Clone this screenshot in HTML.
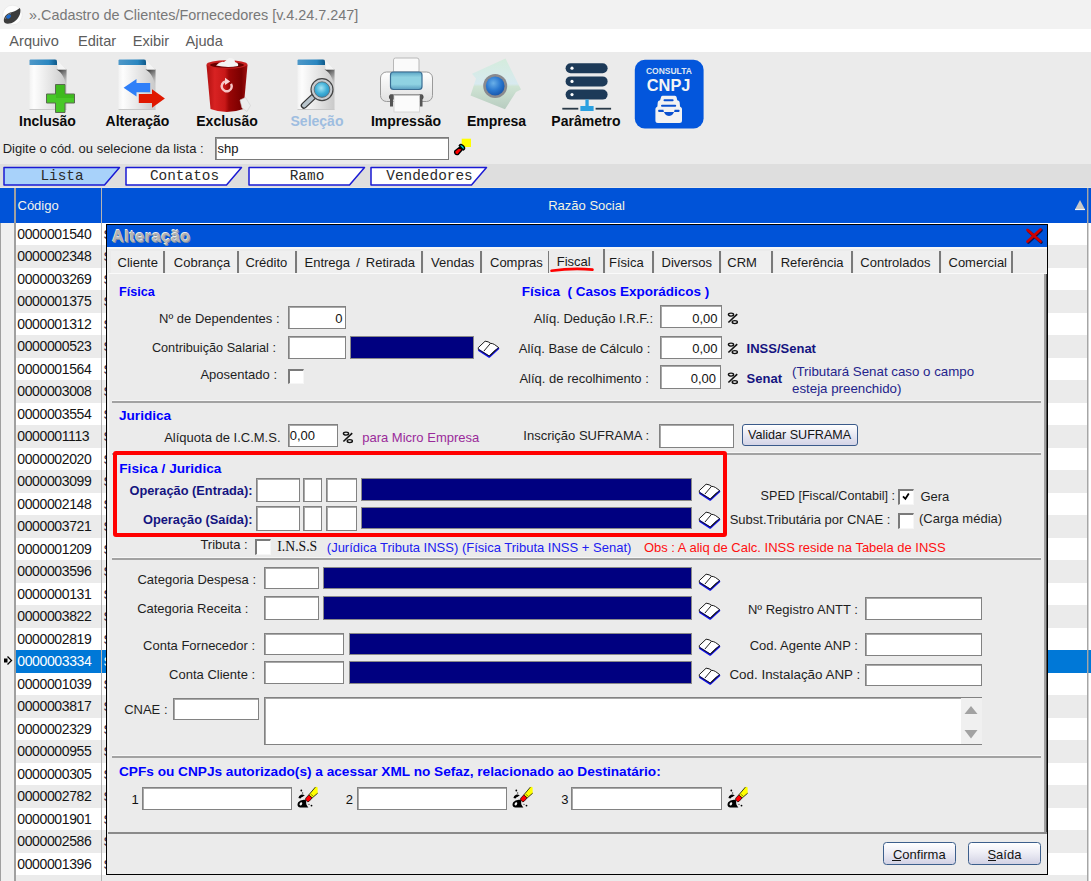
<!DOCTYPE html>
<html><head><meta charset="utf-8">
<style>
html,body{margin:0;padding:0;}
body{width:1091px;height:881px;overflow:hidden;position:relative;background:#ebebeb;font-family:"Liberation Sans", sans-serif;}
.a{position:absolute;}
.t{position:absolute;white-space:pre;line-height:1;}
</style></head><body>

<div class="a" style="left:0px;top:0px;width:1091px;height:29px;background:#f2f2f2;"></div>
<svg class="a" style="left:1px;top:3px" width="24" height="24" viewBox="0 0 24 24">
<circle cx="11.5" cy="12" r="9.8" fill="#fdfdfd" stroke="#e4e4e4" stroke-width="0.6"/>
<path d="M2.8 17.5 C3 13 6.5 9.8 10.5 9.2 C14 8.6 16.5 6.5 18.8 5 C20.5 8 19 14.5 13.5 18.5 C9.5 21.3 2.8 22 2.8 17.5 Z" fill="#3c3c3c"/>
<path d="M4.5 16 C5 13 7.5 11 10 10.5" stroke="#8a8a8a" stroke-width="0.8" fill="none"/>
<ellipse cx="7.6" cy="13.6" rx="2.5" ry="1.9" fill="#1a6ad0" transform="rotate(-30 7.6 13.6)"/>
</svg>
<div class="t" style="left:29px;top:7.81px;font-size:14.4px;font-weight:normal;color:#787878;font-family:'Liberation Sans', sans-serif;">».Cadastro de Clientes/Fornecedores [v.4.24.7.247]</div>
<div class="a" style="left:0px;top:29px;width:1091px;height:23px;background:#ffffff;"></div>
<div class="t" style="left:9.3px;top:33.64px;font-size:14.6px;font-weight:normal;color:#5c5c5c;font-family:'Liberation Sans', sans-serif;">Arquivo</div>
<div class="t" style="left:78px;top:33.64px;font-size:14.6px;font-weight:normal;color:#5c5c5c;font-family:'Liberation Sans', sans-serif;">Editar</div>
<div class="t" style="left:132.7px;top:33.64px;font-size:14.6px;font-weight:normal;color:#5c5c5c;font-family:'Liberation Sans', sans-serif;">Exibir</div>
<div class="t" style="left:185.5px;top:33.64px;font-size:14.6px;font-weight:normal;color:#5c5c5c;font-family:'Liberation Sans', sans-serif;">Ajuda</div>
<div class="a" style="left:0px;top:52px;width:1091px;height:112px;background:#ebebeb;"></div>
<svg width="0" height="0" style="position:absolute">
<defs>
<linearGradient id="pg" x1="0" y1="0" x2="1" y2="0">
<stop offset="0" stop-color="#f2f2f2"/><stop offset="0.12" stop-color="#fdfdfd"/><stop offset="0.6" stop-color="#e2e2e2"/><stop offset="1" stop-color="#c9c9c9"/></linearGradient>
<linearGradient id="pb" x1="0" y1="0" x2="1" y2="0">
<stop offset="0" stop-color="#4f98c8"/><stop offset="0.7" stop-color="#2a86c0"/><stop offset="1" stop-color="#0f5a8a"/></linearGradient>
<linearGradient id="fold" x1="0" y1="0" x2="1" y2="1">
<stop offset="0" stop-color="#ffffff"/><stop offset="0.5" stop-color="#e6e6e6"/><stop offset="0.5" stop-color="#555"/><stop offset="1" stop-color="#c8c8c8"/></linearGradient>
<linearGradient id="shad2" x1="0.2" y1="0" x2="0.6" y2="1"><stop offset="0" stop-color="#2a2a2a" stop-opacity="0.95"/><stop offset="0.5" stop-color="#777" stop-opacity="0.6"/><stop offset="1" stop-color="#c8c8c8" stop-opacity="0"/></linearGradient>
<linearGradient id="shad" x1="0" y1="0" x2="0" y2="1">
<stop offset="0" stop-color="#3a3a3a" stop-opacity="0.85"/><stop offset="1" stop-color="#c8c8c8" stop-opacity="0"/></linearGradient>
<linearGradient id="trash" x1="0" y1="0" x2="1" y2="0">
<stop offset="0" stop-color="#b01010"/><stop offset="0.2" stop-color="#d82222"/><stop offset="0.45" stop-color="#c81818"/><stop offset="0.55" stop-color="#9a0606"/><stop offset="0.85" stop-color="#7a0000"/><stop offset="1" stop-color="#a01010"/></linearGradient>
<radialGradient id="lens" cx="0.45" cy="0.4" r="0.6">
<stop offset="0" stop-color="#a8e4f4"/><stop offset="0.6" stop-color="#40b0d8"/><stop offset="1" stop-color="#2a90c0"/></radialGradient>
<linearGradient id="prb" x1="0" y1="0" x2="0" y2="1">
<stop offset="0" stop-color="#ffffff"/><stop offset="1" stop-color="#e0e0e0"/></linearGradient>
<linearGradient id="prp" x1="0" y1="0" x2="0" y2="1">
<stop offset="0" stop-color="#5aa4c4"/><stop offset="0.3" stop-color="#8fd2e2"/><stop offset="0.7" stop-color="#8fd2e2"/><stop offset="1" stop-color="#5a9ec0"/></linearGradient>
<linearGradient id="emp" x1="0" y1="0" x2="0" y2="1">
<stop offset="0" stop-color="#d4ecdc"/><stop offset="0.5" stop-color="#d8eaf0"/><stop offset="0.55" stop-color="#cfe4d4"/><stop offset="1" stop-color="#b8ccc0"/></linearGradient>
<radialGradient id="ball" cx="0.4" cy="0.35" r="0.65">
<stop offset="0" stop-color="#6ab0e8"/><stop offset="0.6" stop-color="#2a78d0"/><stop offset="1" stop-color="#1a5ab0"/></radialGradient>
<linearGradient id="btn" x1="0" y1="0" x2="0" y2="1">
<stop offset="0" stop-color="#ffffff"/><stop offset="0.5" stop-color="#ececf4"/><stop offset="1" stop-color="#cfcfe2"/></linearGradient>
</defs></svg>
<svg class="a" style="left:28.5px;top:59px" width="40" height="52" viewBox="0 0 40 52">
<path d="M0.5 5 L0.5 50.5 L37.5 50.5 L37.5 10.5 L28 0.5 L0.5 0.5 Z" fill="url(#pg)"/>
<path d="M27.5 10.5 L37.5 10.5 L37.5 30 C36.5 20 33 13 27.5 10.5 Z" fill="url(#shad2)"/>
<path d="M28 0.5 L37.5 10.5 L28.5 10.5 Z" fill="#f4f4f4"/>
<path d="M0.5 1.5 Q0.5 0.5 1.5 0.5 L26 0.5 Q28 0.5 28 2.5 L28 6 L0.5 6 Z" fill="url(#pb)"/>
<path d="M0.5 50.5 L37.5 50.5" stroke="#c8c8c8" stroke-width="1"/>
</svg>
<svg class="a" style="left:45px;top:83px" width="32" height="31" viewBox="0 0 32 31">
<path d="M10.5 1.5 L20 1.5 L20 11 L29.5 11 L29.5 20 L20 20 L20 29.5 L10.5 29.5 L10.5 20 L1.5 20 L1.5 11 L10.5 11 Z" fill="#48c828" stroke="#5a6a50" stroke-width="1"/>
<path d="M11 2 L19.5 2 L19.5 11.5 L29 11.5 L29 15 L11 15 Z" fill="#38b018" opacity="0.6"/>
</svg>
<div class="t" style="left:47.5px;transform:translateX(-50%);top:114.15px;font-size:14px;font-weight:bold;color:#0a0a0a;font-family:'Liberation Sans', sans-serif;">Inclusão</div>
<svg class="a" style="left:117.5px;top:59px" width="40" height="52" viewBox="0 0 40 52">
<path d="M0.5 5 L0.5 50.5 L37.5 50.5 L37.5 10.5 L28 0.5 L0.5 0.5 Z" fill="url(#pg)"/>
<path d="M27.5 10.5 L37.5 10.5 L37.5 30 C36.5 20 33 13 27.5 10.5 Z" fill="url(#shad2)"/>
<path d="M28 0.5 L37.5 10.5 L28.5 10.5 Z" fill="#f4f4f4"/>
<path d="M0.5 1.5 Q0.5 0.5 1.5 0.5 L26 0.5 Q28 0.5 28 2.5 L28 6 L0.5 6 Z" fill="url(#pb)"/>
<path d="M0.5 50.5 L37.5 50.5" stroke="#c8c8c8" stroke-width="1"/>
</svg>
<svg class="a" style="left:120px;top:76px" width="48" height="34" viewBox="0 0 48 34">
<path d="M3.6 11.8 L16.5 2.9 L16.5 7 L30.2 7 L30.2 16.2 L16.5 16.2 L16.5 20.6 Z" fill="#2f7ff8"/>
<path d="M18.8 18 L32 18 L32 13.2 L44.9 22.5 L32 31.7 L32 26.9 L18.8 26.9 Z" fill="#e01800"/>
</svg>
<div class="t" style="left:137.5px;transform:translateX(-50%);top:114.15px;font-size:14px;font-weight:bold;color:#0a0a0a;font-family:'Liberation Sans', sans-serif;">Alteração</div>
<svg class="a" style="left:204px;top:55px" width="48" height="60" viewBox="0 0 48 60">
<path d="M2.5 10 Q22.5 3 43.5 10 L39.5 54 Q22.5 60 6.5 54 Z" fill="url(#trash)"/>
<ellipse cx="23" cy="9.5" rx="20.5" ry="4.2" fill="#c82020"/>
<ellipse cx="23" cy="10" rx="17" ry="2.8" fill="#6a0000"/>
<path d="M12 10.5 Q16 6 20 7 L25 3 Q31 3 31 7 Q35 8 34 11 Q23 13 12 10.5 Z" fill="#f4f4f4"/>
<path d="M27.03 28.8 A5 5 0 1 1 21.5 26.45" fill="none" stroke="#f6c4c4" stroke-width="2.4"/>
<path d="M21 22.8 L26.2 26.4 L21 30 Z" fill="#f8d4d4"/>
<path d="M36 45 L41.5 42.5 L46.5 50.5 L43 56.5 L38 53 Z" fill="#ececec" stroke="#cfcfcf" stroke-width="0.6"/>
</svg>
<div class="t" style="left:227px;transform:translateX(-50%);top:114.15px;font-size:14px;font-weight:bold;color:#0a0a0a;font-family:'Liberation Sans', sans-serif;">Exclusão</div>
<svg class="a" style="left:297px;top:59px" width="40" height="52" viewBox="0 0 40 52">
<path d="M0.5 5 L0.5 50.5 L37.5 50.5 L37.5 10.5 L28 0.5 L0.5 0.5 Z" fill="url(#pg)"/>
<path d="M27.5 10.5 L37.5 10.5 L37.5 30 C36.5 20 33 13 27.5 10.5 Z" fill="url(#shad2)"/>
<path d="M28 0.5 L37.5 10.5 L28.5 10.5 Z" fill="#f4f4f4"/>
<path d="M0.5 1.5 Q0.5 0.5 1.5 0.5 L26 0.5 Q28 0.5 28 2.5 L28 6 L0.5 6 Z" fill="url(#pb)"/>
<path d="M0.5 50.5 L37.5 50.5" stroke="#c8c8c8" stroke-width="1"/>
</svg>
<svg class="a" style="left:300px;top:76px" width="36" height="34" viewBox="0 0 36 34">
<path d="M4 29.5 L13 21" stroke="#333" stroke-width="6.5" stroke-linecap="round"/>
<path d="M4 29.5 L13 21" stroke="#b8c4cc" stroke-width="4" stroke-linecap="round"/>
<circle cx="22" cy="13.6" r="11" fill="#c8ccd0" stroke="#444" stroke-width="1.2"/>
<circle cx="22" cy="13.6" r="7.8" fill="url(#lens)" stroke="#606468" stroke-width="0.8"/>
</svg>
<div class="t" style="left:317px;transform:translateX(-50%);top:114.15px;font-size:14px;font-weight:bold;color:#9ebde0;font-family:'Liberation Sans', sans-serif;">Seleção</div>
<svg class="a" style="left:379px;top:57px" width="56" height="57" viewBox="0 0 56 57">
<rect x="14.5" y="1" width="25.5" height="15" rx="2" fill="#fafafa" stroke="#b8b8b8" stroke-width="1"/>
<rect x="1.5" y="15" width="52" height="29.5" rx="6" fill="url(#prb)" stroke="#9a9a9a" stroke-width="1"/>
<rect x="11.5" y="15" width="31.5" height="17.5" rx="3" fill="url(#prp)" stroke="#3a6e94" stroke-width="1.2"/>
<rect x="10" y="37.5" width="34.5" height="5" rx="2" fill="#4a4a4a"/>
<rect x="11" y="37.5" width="3" height="12" fill="#555"/>
<rect x="40.5" y="37.5" width="3" height="12" fill="#555"/>
<rect x="15" y="38.5" width="25.5" height="16.5" fill="#fbfbfb" stroke="#d0d0d0" stroke-width="0.8"/>
</svg>
<div class="t" style="left:406px;transform:translateX(-50%);top:114.15px;font-size:14px;font-weight:bold;color:#0a0a0a;font-family:'Liberation Sans', sans-serif;">Impressão</div>
<svg class="a" style="left:468px;top:56px" width="56" height="56" viewBox="0 0 56 56">
<path d="M37.5 2.6 L53 33.6 L48 36 L37 53.2 L2.5 39.5 L8 22.5 L4 17.8 Z" fill="url(#emp)"/>
<circle cx="27.2" cy="30" r="12" fill="#8a8a8e"/>
<circle cx="27.2" cy="30" r="9.4" fill="url(#ball)"/>
</svg>
<div class="t" style="left:496.5px;transform:translateX(-50%);top:114.15px;font-size:14px;font-weight:bold;color:#0a0a0a;font-family:'Liberation Sans', sans-serif;">Empresa</div>
<svg class="a" style="left:560px;top:60px" width="56" height="54" viewBox="0 0 56 54">
<rect x="5.6" y="3.2" width="42" height="10" rx="5" fill="#1d3a58"/>
<rect x="5.6" y="16.4" width="42" height="10" rx="5" fill="#1d3a58"/>
<rect x="5.6" y="29.6" width="42" height="10" rx="5" fill="#1d3a58"/>
<circle cx="12" cy="8.2" r="1.6" fill="#fff"/><circle cx="12" cy="21.4" r="1.6" fill="#fff"/><circle cx="12" cy="34.6" r="1.6" fill="#fff"/>
<rect x="25.4" y="39.5" width="3.3" height="7" fill="#2aa0e0"/>
<rect x="20.4" y="46" width="13.2" height="5" fill="#2aa0e0"/>
<rect x="2.3" y="47.8" width="16" height="1.8" fill="#2a3a48"/>
<rect x="35.6" y="47.8" width="15.5" height="1.8" fill="#2a3a48"/>
</svg>
<div class="t" style="left:586px;transform:translateX(-50%);top:114.15px;font-size:14px;font-weight:bold;color:#0a0a0a;font-family:'Liberation Sans', sans-serif;">Parâmetro</div>
<svg class="a" style="left:634px;top:59px" width="71" height="71" viewBox="0 0 71 71">
<rect x="0.8" y="0.8" width="68.8" height="68.6" rx="10" fill="#0356dc"/>
<text x="11.9" y="14.6" textLength="46" lengthAdjust="spacingAndGlyphs" font-family="Liberation Sans" font-weight="bold" font-size="8.2" fill="#dfe6f2">CONSULTA</text>
<text x="12.8" y="32.3" textLength="43.6" lengthAdjust="spacingAndGlyphs" font-family="Liberation Sans" font-weight="bold" font-size="16.2" fill="#f4f4f4">CNPJ</text>
<path d="M27 38.3 Q27 36.8 28.5 36.8 L40.9 36.8 Q42.4 36.8 42.6 38.3 L43.3 41.3 L44.6 41.8 Q45.6 42.3 45.7 43.8 L46 47.6 L47 48.2 Q48 48.8 48 50.3 L48 61.5 Q48 64 45.5 64 L23.9 64 Q21.4 64 21.4 61.5 L21.4 50.3 Q21.4 48.8 22.4 48.2 L23.4 47.6 L23.7 43.8 Q23.8 42.3 24.8 41.8 L26.1 41.3 Z" fill="#f2f2f2"/>
<rect x="29.5" y="40.2" width="10.1" height="2.1" rx="1" fill="#0a50d0"/>
<rect x="27" y="45.7" width="15.2" height="2" rx="1" fill="#0a50d0"/>
<path d="M24.8 50.8 L29.4 50.8 Q30.2 56.9 35 56.9 Q39.8 56.9 40.6 50.8 L44.9 50.8 Q45.6 50.8 45.6 51.8 Q45.6 52.9 44.9 52.9 L24.8 52.9 Q24.1 52.9 24.1 51.8 Q24.1 50.8 24.8 50.8 Z" fill="#0a50d0"/>
</svg>
<div class="t" style="left:2.7px;top:141.70px;font-size:13px;font-weight:normal;color:#1e1e1e;font-family:'Liberation Sans', sans-serif;">Digite o cód. ou selecione da lista :</div>
<div class="a" style="left:215px;top:137px;width:234px;height:23px;background:#fff;box-sizing:border-box;border:1px solid #7a7a7a;box-shadow:inset 1px 1px 0 #9a9a9a;"></div>
<div class="t" style="left:217.5px;top:141.50px;font-size:13px;font-weight:normal;color:#111;font-family:'Liberation Sans', sans-serif;">shp</div>
<svg class="a" style="left:452px;top:137px" width="22" height="20" viewBox="0 0 22 20">
<rect x="9.7" y="1.7" width="9.3" height="8.3" fill="#ffff00"/>
<path d="M2.8 14 L7.6 10.2 L10.2 12.8 L6.3 17.3 Q4.5 18.2 3.2 16.8 Q2.2 15.5 2.8 14 Z" fill="#ff0000" stroke="#000" stroke-width="1.4" stroke-linejoin="round"/>
<path d="M7.2 8.6 Q8.6 6.8 10.6 8.2 L12 9.6 Q13.4 11.6 11.4 13 Z" fill="#00e8e8" stroke="#000" stroke-width="1.4" stroke-linejoin="round"/>
</svg>
<div class="a" style="left:0px;top:164px;width:1091px;height:24px;background:#dedede;"></div>
<svg class="a" style="left:2.5px;top:166px" width="120" height="21" viewBox="0 0 120 21">
<path d="M1 1.5 L116.5 1.5 L101.5 19 L1 19 Z" fill="#a8d2fa" stroke="#1a1ad4" stroke-width="1.5" stroke-linejoin="round"/>
</svg>
<div class="t" style="left:62.0px;transform:translateX(-50%);top:169.41px;font-size:14.4px;font-weight:normal;color:#2a2a2a;font-family:'Liberation Mono', monospace;">Lista</div>
<svg class="a" style="left:125px;top:166px" width="120" height="21" viewBox="0 0 120 21">
<path d="M1 1.5 L116.5 1.5 L101.5 19 L1 19 Z" fill="#ffffff" stroke="#1a1ad4" stroke-width="1.5" stroke-linejoin="round"/>
</svg>
<div class="t" style="left:184.5px;transform:translateX(-50%);top:169.41px;font-size:14.4px;font-weight:normal;color:#2a2a2a;font-family:'Liberation Mono', monospace;">Contatos</div>
<svg class="a" style="left:247.5px;top:166px" width="120" height="21" viewBox="0 0 120 21">
<path d="M1 1.5 L116.5 1.5 L101.5 19 L1 19 Z" fill="#ffffff" stroke="#1a1ad4" stroke-width="1.5" stroke-linejoin="round"/>
</svg>
<div class="t" style="left:307.0px;transform:translateX(-50%);top:169.41px;font-size:14.4px;font-weight:normal;color:#2a2a2a;font-family:'Liberation Mono', monospace;">Ramo</div>
<svg class="a" style="left:370px;top:166px" width="120" height="21" viewBox="0 0 120 21">
<path d="M1 1.5 L116.5 1.5 L101.5 19 L1 19 Z" fill="#ffffff" stroke="#1a1ad4" stroke-width="1.5" stroke-linejoin="round"/>
</svg>
<div class="t" style="left:429.5px;transform:translateX(-50%);top:169.41px;font-size:14.4px;font-weight:normal;color:#2a2a2a;font-family:'Liberation Mono', monospace;">Vendedores</div>
<div class="a" style="left:0px;top:188px;width:1091px;height:693px;background:#ffffff;"></div>
<div class="a" style="left:0px;top:187px;width:1091px;height:1px;background:#e6e6e6;"></div>
<div class="a" style="left:0px;top:188px;width:1091px;height:35px;background:#0053d8;"></div>
<div class="t" style="left:17.3px;top:227.15px;font-size:14px;font-weight:normal;color:#141414;font-family:'Liberation Sans', sans-serif;letter-spacing:-0.38px;">0000001540</div>
<div class="a" style="left:16px;top:245px;width:1071px;height:23px;background:#ebebeb;"></div>
<div class="t" style="left:17.3px;top:249.15px;font-size:14px;font-weight:normal;color:#141414;font-family:'Liberation Sans', sans-serif;letter-spacing:-0.38px;">0000002348</div>
<div class="t" style="left:17.3px;top:272.15px;font-size:14px;font-weight:normal;color:#141414;font-family:'Liberation Sans', sans-serif;letter-spacing:-0.38px;">0000003269</div>
<div class="a" style="left:16px;top:290px;width:1071px;height:23px;background:#ebebeb;"></div>
<div class="t" style="left:17.3px;top:294.15px;font-size:14px;font-weight:normal;color:#141414;font-family:'Liberation Sans', sans-serif;letter-spacing:-0.38px;">0000001375</div>
<div class="t" style="left:17.3px;top:317.15px;font-size:14px;font-weight:normal;color:#141414;font-family:'Liberation Sans', sans-serif;letter-spacing:-0.38px;">0000001312</div>
<div class="a" style="left:16px;top:335px;width:1071px;height:23px;background:#ebebeb;"></div>
<div class="t" style="left:17.3px;top:339.15px;font-size:14px;font-weight:normal;color:#141414;font-family:'Liberation Sans', sans-serif;letter-spacing:-0.38px;">0000000523</div>
<div class="t" style="left:17.3px;top:362.15px;font-size:14px;font-weight:normal;color:#141414;font-family:'Liberation Sans', sans-serif;letter-spacing:-0.38px;">0000001564</div>
<div class="a" style="left:16px;top:380px;width:1071px;height:23px;background:#ebebeb;"></div>
<div class="t" style="left:17.3px;top:384.15px;font-size:14px;font-weight:normal;color:#141414;font-family:'Liberation Sans', sans-serif;letter-spacing:-0.38px;">0000003008</div>
<div class="t" style="left:17.3px;top:407.15px;font-size:14px;font-weight:normal;color:#141414;font-family:'Liberation Sans', sans-serif;letter-spacing:-0.38px;">0000003554</div>
<div class="a" style="left:16px;top:425px;width:1071px;height:23px;background:#ebebeb;"></div>
<div class="t" style="left:17.3px;top:429.15px;font-size:14px;font-weight:normal;color:#141414;font-family:'Liberation Sans', sans-serif;letter-spacing:-0.38px;">0000001113</div>
<div class="t" style="left:17.3px;top:452.15px;font-size:14px;font-weight:normal;color:#141414;font-family:'Liberation Sans', sans-serif;letter-spacing:-0.38px;">0000002020</div>
<div class="a" style="left:16px;top:470px;width:1071px;height:23px;background:#ebebeb;"></div>
<div class="t" style="left:17.3px;top:474.15px;font-size:14px;font-weight:normal;color:#141414;font-family:'Liberation Sans', sans-serif;letter-spacing:-0.38px;">0000003099</div>
<div class="t" style="left:17.3px;top:497.15px;font-size:14px;font-weight:normal;color:#141414;font-family:'Liberation Sans', sans-serif;letter-spacing:-0.38px;">0000002148</div>
<div class="a" style="left:16px;top:515px;width:1071px;height:23px;background:#ebebeb;"></div>
<div class="t" style="left:17.3px;top:519.15px;font-size:14px;font-weight:normal;color:#141414;font-family:'Liberation Sans', sans-serif;letter-spacing:-0.38px;">0000003721</div>
<div class="t" style="left:17.3px;top:542.15px;font-size:14px;font-weight:normal;color:#141414;font-family:'Liberation Sans', sans-serif;letter-spacing:-0.38px;">0000001209</div>
<div class="a" style="left:16px;top:560px;width:1071px;height:23px;background:#ebebeb;"></div>
<div class="t" style="left:17.3px;top:564.15px;font-size:14px;font-weight:normal;color:#141414;font-family:'Liberation Sans', sans-serif;letter-spacing:-0.38px;">0000003596</div>
<div class="t" style="left:17.3px;top:587.15px;font-size:14px;font-weight:normal;color:#141414;font-family:'Liberation Sans', sans-serif;letter-spacing:-0.38px;">0000000131</div>
<div class="a" style="left:16px;top:605px;width:1071px;height:23px;background:#ebebeb;"></div>
<div class="t" style="left:17.3px;top:609.15px;font-size:14px;font-weight:normal;color:#141414;font-family:'Liberation Sans', sans-serif;letter-spacing:-0.38px;">0000003822</div>
<div class="t" style="left:17.3px;top:632.15px;font-size:14px;font-weight:normal;color:#141414;font-family:'Liberation Sans', sans-serif;letter-spacing:-0.38px;">0000002819</div>
<div class="a" style="left:16px;top:650px;width:1075px;height:23px;background:#0078d7;"></div>
<div class="t" style="left:17.3px;top:654.15px;font-size:14px;font-weight:normal;color:#ffffff;font-family:'Liberation Sans', sans-serif;letter-spacing:-0.38px;">0000003334</div>
<div class="t" style="left:17.3px;top:677.15px;font-size:14px;font-weight:normal;color:#141414;font-family:'Liberation Sans', sans-serif;letter-spacing:-0.38px;">0000001039</div>
<div class="a" style="left:16px;top:695px;width:1071px;height:23px;background:#ebebeb;"></div>
<div class="t" style="left:17.3px;top:699.15px;font-size:14px;font-weight:normal;color:#141414;font-family:'Liberation Sans', sans-serif;letter-spacing:-0.38px;">0000003817</div>
<div class="t" style="left:17.3px;top:722.15px;font-size:14px;font-weight:normal;color:#141414;font-family:'Liberation Sans', sans-serif;letter-spacing:-0.38px;">0000002329</div>
<div class="a" style="left:16px;top:740px;width:1071px;height:23px;background:#ebebeb;"></div>
<div class="t" style="left:17.3px;top:744.15px;font-size:14px;font-weight:normal;color:#141414;font-family:'Liberation Sans', sans-serif;letter-spacing:-0.38px;">0000000955</div>
<div class="t" style="left:17.3px;top:767.15px;font-size:14px;font-weight:normal;color:#141414;font-family:'Liberation Sans', sans-serif;letter-spacing:-0.38px;">0000000305</div>
<div class="a" style="left:16px;top:785px;width:1071px;height:23px;background:#ebebeb;"></div>
<div class="t" style="left:17.3px;top:789.15px;font-size:14px;font-weight:normal;color:#141414;font-family:'Liberation Sans', sans-serif;letter-spacing:-0.38px;">0000002782</div>
<div class="t" style="left:17.3px;top:812.15px;font-size:14px;font-weight:normal;color:#141414;font-family:'Liberation Sans', sans-serif;letter-spacing:-0.38px;">0000001901</div>
<div class="a" style="left:16px;top:830px;width:1071px;height:23px;background:#ebebeb;"></div>
<div class="t" style="left:17.3px;top:834.15px;font-size:14px;font-weight:normal;color:#141414;font-family:'Liberation Sans', sans-serif;letter-spacing:-0.38px;">0000002586</div>
<div class="t" style="left:17.3px;top:857.15px;font-size:14px;font-weight:normal;color:#141414;font-family:'Liberation Sans', sans-serif;letter-spacing:-0.38px;">0000001396</div>
<div class="a" style="left:16px;top:875px;width:1071px;height:23px;background:#ebebeb;"></div>
<div class="a" style="left:0px;top:223px;width:14px;height:658px;background:#f0f0f0;"></div>
<div class="a" style="left:0px;top:223px;width:1px;height:658px;background:#a0a0a0;"></div>
<div class="a" style="left:14px;top:188px;width:2px;height:693px;background:#a0a0a0;"></div>
<div class="a" style="left:101px;top:188px;width:1px;height:693px;background:#b4b4b4;"></div>
<div class="a" style="left:1087px;top:188px;width:1px;height:693px;background:#a6a6a6;"></div>
<div class="a" style="left:1088px;top:188px;width:1px;height:693px;background:rgba(160,160,160,0.45);"></div>
<div class="a" style="left:102px;top:223px;width:4px;height:658px;overflow:hidden;"><div class="t" style="left:1.6px;top:5.00px;font-size:13px;color:#2a1a40;font-family:'Liberation Sans'">S</div><div class="t" style="left:1.6px;top:27.00px;font-size:13px;color:#2a1a40;font-family:'Liberation Sans'">S</div><div class="t" style="left:1.6px;top:50.00px;font-size:13px;color:#2a1a40;font-family:'Liberation Sans'">S</div><div class="t" style="left:1.6px;top:72.00px;font-size:13px;color:#2a1a40;font-family:'Liberation Sans'">S</div><div class="t" style="left:1.6px;top:95.00px;font-size:13px;color:#2a1a40;font-family:'Liberation Sans'">S</div><div class="t" style="left:1.6px;top:117.00px;font-size:13px;color:#2a1a40;font-family:'Liberation Sans'">S</div><div class="t" style="left:1.6px;top:140.00px;font-size:13px;color:#2a1a40;font-family:'Liberation Sans'">S</div><div class="t" style="left:1.6px;top:162.00px;font-size:13px;color:#2a1a40;font-family:'Liberation Sans'">S</div><div class="t" style="left:1.6px;top:185.00px;font-size:13px;color:#2a1a40;font-family:'Liberation Sans'">S</div><div class="t" style="left:1.6px;top:207.00px;font-size:13px;color:#2a1a40;font-family:'Liberation Sans'">S</div><div class="t" style="left:1.6px;top:230.00px;font-size:13px;color:#2a1a40;font-family:'Liberation Sans'">S</div><div class="t" style="left:1.6px;top:252.00px;font-size:13px;color:#2a1a40;font-family:'Liberation Sans'">S</div><div class="t" style="left:1.6px;top:275.00px;font-size:13px;color:#2a1a40;font-family:'Liberation Sans'">S</div><div class="t" style="left:1.6px;top:297.00px;font-size:13px;color:#2a1a40;font-family:'Liberation Sans'">S</div><div class="t" style="left:1.6px;top:320.00px;font-size:13px;color:#2a1a40;font-family:'Liberation Sans'">S</div><div class="t" style="left:1.6px;top:342.00px;font-size:13px;color:#2a1a40;font-family:'Liberation Sans'">S</div><div class="t" style="left:1.6px;top:365.00px;font-size:13px;color:#2a1a40;font-family:'Liberation Sans'">S</div><div class="t" style="left:1.6px;top:387.00px;font-size:13px;color:#2a1a40;font-family:'Liberation Sans'">S</div><div class="t" style="left:1.6px;top:410.00px;font-size:13px;color:#2a1a40;font-family:'Liberation Sans'">S</div><div class="t" style="left:1.6px;top:432.00px;font-size:13px;color:#ffffff;font-family:'Liberation Sans'">S</div><div class="t" style="left:1.6px;top:455.00px;font-size:13px;color:#2a1a40;font-family:'Liberation Sans'">S</div><div class="t" style="left:1.6px;top:477.00px;font-size:13px;color:#2a1a40;font-family:'Liberation Sans'">S</div><div class="t" style="left:1.6px;top:500.00px;font-size:13px;color:#2a1a40;font-family:'Liberation Sans'">S</div><div class="t" style="left:1.6px;top:522.00px;font-size:13px;color:#2a1a40;font-family:'Liberation Sans'">S</div><div class="t" style="left:1.6px;top:545.00px;font-size:13px;color:#2a1a40;font-family:'Liberation Sans'">S</div><div class="t" style="left:1.6px;top:567.00px;font-size:13px;color:#2a1a40;font-family:'Liberation Sans'">S</div><div class="t" style="left:1.6px;top:590.00px;font-size:13px;color:#2a1a40;font-family:'Liberation Sans'">S</div><div class="t" style="left:1.6px;top:612.00px;font-size:13px;color:#2a1a40;font-family:'Liberation Sans'">S</div><div class="t" style="left:1.6px;top:635.00px;font-size:13px;color:#2a1a40;font-family:'Liberation Sans'">S</div><div class="t" style="left:1.6px;top:657.00px;font-size:13px;color:#2a1a40;font-family:'Liberation Sans'">S</div></div>
<div class="t" style="left:17.5px;top:198.70px;font-size:13px;font-weight:normal;color:#f4f4ec;font-family:'Liberation Sans', sans-serif;">Código</div>
<div class="t" style="left:586.5px;transform:translateX(-50%);top:198.70px;font-size:13px;font-weight:normal;color:#f4f4e0;font-family:'Liberation Sans', sans-serif;">Razão Social</div>
<svg class="a" style="left:1074px;top:199px" width="12" height="12" viewBox="0 0 12 12">
<path d="M6 1 L11 10.5 L1 10.5 Z" fill="#c8c8c8"/><path d="M1 10.5 L11 10.5" stroke="#f4f4f4" stroke-width="1.2"/>
</svg>
<svg class="a" style="left:3px;top:655px" width="10" height="11" viewBox="0 0 10 11">
<rect x="1" y="3.5" width="3.5" height="4" fill="#000"/>
<path d="M4.5 1.5 L8.5 5.5 L4.5 9.5" fill="none" stroke="#000" stroke-width="1.3"/>
</svg>
<div class="a" style="left:106px;top:224px;width:942px;height:650.5px;background:#ebebeb;box-sizing:border-box;border:1.4px solid #000;"></div>
<div class="a" style="left:107.4px;top:225.4px;width:939.4px;height:22px;background:#0053d8;"></div>
<div class="a" style="left:107.4px;top:247.4px;width:939.4px;height:1.6px;background:#f6f6f6;"></div>
<div class="t" style="left:112px;top:227.82px;font-size:16.4px;font-weight:bold;color:#b4b4b4;font-family:'Liberation Sans', sans-serif;letter-spacing:0.45px;text-shadow:-0.6px -0.6px 0 #ececec, 0.8px 0.8px 0 #7a8aa0;">Alteração</div>
<svg class="a" style="left:1023px;top:226px" width="22" height="19" viewBox="0 0 22 19">
<path d="M4.5 4 L17.5 15.5 M17.5 3.5 L4.5 15.5" stroke="#0a1450" stroke-width="3" stroke-linecap="round" transform="translate(0.8,0.8)"/>
<path d="M4.5 4 L17.5 15.5 M17.5 3.5 L4.5 15.5" stroke="#d00000" stroke-width="2.7" stroke-linecap="round"/>
</svg>
<div class="a" style="left:111px;top:251.3px;width:53px;height:21.7px;background:#efefef;"></div>
<div class="t" style="left:117.5px;top:256.20px;font-size:13px;font-weight:normal;color:#1a1a1a;font-family:'Liberation Sans', sans-serif;word-spacing:2.5px;">Cliente</div>
<div class="a" style="left:163px;top:251px;width:2px;height:22px;background:#7a7a7a;"></div>
<div class="a" style="left:166px;top:251.3px;width:71.5px;height:21.7px;background:#efefef;"></div>
<div class="t" style="left:173.8px;top:256.20px;font-size:13px;font-weight:normal;color:#1a1a1a;font-family:'Liberation Sans', sans-serif;word-spacing:2.5px;">Cobrança</div>
<div class="a" style="left:236.5px;top:251px;width:2px;height:22px;background:#7a7a7a;"></div>
<div class="a" style="left:239.5px;top:251.3px;width:56.5px;height:21.7px;background:#efefef;"></div>
<div class="t" style="left:245.4px;top:256.20px;font-size:13px;font-weight:normal;color:#1a1a1a;font-family:'Liberation Sans', sans-serif;word-spacing:2.5px;">Crédito</div>
<div class="a" style="left:295px;top:251px;width:2px;height:22px;background:#7a7a7a;"></div>
<div class="a" style="left:298px;top:251.3px;width:124px;height:21.7px;background:#efefef;"></div>
<div class="t" style="left:304.5px;top:256.20px;font-size:13px;font-weight:normal;color:#1a1a1a;font-family:'Liberation Sans', sans-serif;word-spacing:2.5px;">Entrega / Retirada</div>
<div class="a" style="left:421px;top:251px;width:2px;height:22px;background:#7a7a7a;"></div>
<div class="a" style="left:424px;top:251.3px;width:57px;height:21.7px;background:#efefef;"></div>
<div class="t" style="left:431px;top:256.20px;font-size:13px;font-weight:normal;color:#1a1a1a;font-family:'Liberation Sans', sans-serif;word-spacing:2.5px;">Vendas</div>
<div class="a" style="left:480px;top:251px;width:2px;height:22px;background:#7a7a7a;"></div>
<div class="a" style="left:483px;top:251.3px;width:65.5px;height:21.7px;background:#efefef;"></div>
<div class="t" style="left:490px;top:256.20px;font-size:13px;font-weight:normal;color:#1a1a1a;font-family:'Liberation Sans', sans-serif;word-spacing:2.5px;">Compras</div>
<div class="a" style="left:547.5px;top:251px;width:2px;height:22px;background:#7a7a7a;"></div>
<div class="a" style="left:549px;top:249px;width:54.5px;height:25px;background:#ececec;"></div>
<div class="t" style="left:556.7px;top:254.60px;font-size:13px;font-weight:normal;color:#1a1a1a;font-family:'Liberation Sans', sans-serif;">Fiscal</div>
<svg class="a" style="left:549px;top:266px" width="46" height="8" viewBox="0 0 46 8">
<path d="M2.5 4.8 Q23 1.8 43.5 3.6" stroke="#ff0000" stroke-width="2.6" fill="none" stroke-linecap="round"/></svg>
<div class="a" style="left:602.5px;top:249px;width:2px;height:24px;background:#7a7a7a;"></div>
<div class="a" style="left:605.5px;top:251.3px;width:47.5px;height:21.7px;background:#efefef;"></div>
<div class="t" style="left:609px;top:256.20px;font-size:13px;font-weight:normal;color:#1a1a1a;font-family:'Liberation Sans', sans-serif;word-spacing:2.5px;">Física</div>
<div class="a" style="left:652px;top:251px;width:2px;height:22px;background:#7a7a7a;"></div>
<div class="a" style="left:655px;top:251.3px;width:65px;height:21.7px;background:#efefef;"></div>
<div class="t" style="left:661.5px;top:256.20px;font-size:13px;font-weight:normal;color:#1a1a1a;font-family:'Liberation Sans', sans-serif;word-spacing:2.5px;">Diversos</div>
<div class="a" style="left:719px;top:251px;width:2px;height:22px;background:#7a7a7a;"></div>
<div class="a" style="left:722px;top:251.3px;width:50px;height:21.7px;background:#efefef;"></div>
<div class="t" style="left:727.3px;top:256.20px;font-size:13px;font-weight:normal;color:#1a1a1a;font-family:'Liberation Sans', sans-serif;word-spacing:2.5px;">CRM</div>
<div class="a" style="left:771px;top:251px;width:2px;height:22px;background:#7a7a7a;"></div>
<div class="a" style="left:774px;top:251.3px;width:78px;height:21.7px;background:#efefef;"></div>
<div class="t" style="left:780.7px;top:256.20px;font-size:13px;font-weight:normal;color:#1a1a1a;font-family:'Liberation Sans', sans-serif;word-spacing:2.5px;">Referência</div>
<div class="a" style="left:851px;top:251px;width:2px;height:22px;background:#7a7a7a;"></div>
<div class="a" style="left:854px;top:251.3px;width:85.5px;height:21.7px;background:#efefef;"></div>
<div class="t" style="left:860.3px;top:256.20px;font-size:13px;font-weight:normal;color:#1a1a1a;font-family:'Liberation Sans', sans-serif;word-spacing:2.5px;">Controlados</div>
<div class="a" style="left:938.5px;top:251px;width:2px;height:22px;background:#7a7a7a;"></div>
<div class="a" style="left:941.5px;top:251.3px;width:70.5px;height:21.7px;background:#efefef;"></div>
<div class="t" style="left:948.5px;top:256.20px;font-size:13px;font-weight:normal;color:#1a1a1a;font-family:'Liberation Sans', sans-serif;word-spacing:2.5px;">Comercial</div>
<div class="a" style="left:1011px;top:251px;width:2px;height:22px;background:#7a7a7a;"></div>
<div class="a" style="left:108px;top:273px;width:939px;height:1.2px;background:#fafafa;"></div>
<div class="a" style="left:108px;top:273px;width:1px;height:560px;background:#f6f6f6;"></div>
<div class="a" style="left:1044px;top:274px;width:1.5px;height:559px;background:#a0a0a0;"></div>
<div class="a" style="left:1045.5px;top:274px;width:1.5px;height:559px;background:#505050;"></div>
<div class="a" style="left:108px;top:831.5px;width:939px;height:2px;background:#8a8a8a;"></div>
<div class="a" style="left:112px;top:400px;width:929px;height:1px;background:#f6f6f6;"></div>
<div class="a" style="left:112px;top:401px;width:929px;height:2px;background:#a2a2a2;"></div>
<div class="a" style="left:112px;top:452px;width:929px;height:1px;background:#f6f6f6;"></div>
<div class="a" style="left:112px;top:453px;width:929px;height:2px;background:#a2a2a2;"></div>
<div class="a" style="left:112px;top:557px;width:929px;height:1px;background:#f6f6f6;"></div>
<div class="a" style="left:112px;top:558px;width:929px;height:2px;background:#a2a2a2;"></div>
<div class="a" style="left:112px;top:755px;width:929px;height:1px;background:#f6f6f6;"></div>
<div class="a" style="left:112px;top:756px;width:929px;height:2px;background:#a2a2a2;"></div>
<div class="t" style="left:119px;top:285.73px;font-size:12.6px;font-weight:bold;color:#0000ff;font-family:'Liberation Sans', sans-serif;">Física</div>
<div class="t" style="right:811.5px;top:312.20px;font-size:13px;font-weight:normal;color:#1e1e1e;font-family:'Liberation Sans', sans-serif;">Nº de Dependentes :</div>
<div class="a" style="left:287.5px;top:305.5px;width:58.5px;height:23.5px;background:#fff;box-sizing:border-box;border:1px solid #828282;box-shadow:inset 1px 1px 0 #a8a8a8;"></div>
<div class="t" style="right:748.5px;top:312.20px;font-size:13px;font-weight:normal;color:#111;font-family:'Liberation Sans', sans-serif;">0</div>
<div class="t" style="right:815px;top:341.75px;font-size:12.7px;font-weight:normal;color:#1e1e1e;font-family:'Liberation Sans', sans-serif;">Contribuição Salarial :</div>
<div class="a" style="left:287.5px;top:335.5px;width:58.5px;height:23.5px;background:#fff;box-sizing:border-box;border:1px solid #828282;box-shadow:inset 1px 1px 0 #a8a8a8;"></div>
<div class="a" style="left:349.5px;top:335.5px;width:124.0px;height:23.0px;background:#000080;box-sizing:border-box;border:1px solid #8a8a8a;"></div>
<svg class="a" style="left:477px;top:340px" width="24" height="19" viewBox="0 0 24 19">
<path d="M1.3 7.6 L8.1 1.2 Q11.5 1.4 13.5 3.3 Q15.8 3.4 17.6 4.6 L21.8 7.7 L12.3 16.4 L1.3 9.6 Z" fill="#fff"/>
<path d="M1.5 9.9 L12.3 16.8 L21.8 8.1" stroke="#0c0cf0" stroke-width="2" fill="none" stroke-linejoin="round"/>
<path d="M1.3 7.6 L8.1 1.2 Q11.5 1.4 13.5 3.3 Q15.8 3.4 17.6 4.6 L21.8 7.7 L12.3 16 L1.3 9.4 Z" stroke="#1a1a1a" stroke-width="1" fill="none" stroke-linejoin="round"/>
<path d="M13.5 3.3 L6.8 11.2 M12.3 16 L18.6 9.8 M14.2 14.6 L19.6 9.3" stroke="#222" stroke-width="1" fill="none"/>
</svg>
<div class="t" style="right:814px;top:368.00px;font-size:13px;font-weight:normal;color:#1e1e1e;font-family:'Liberation Sans', sans-serif;">Aposentado :</div>
<div class="a" style="left:287.5px;top:368.5px;width:16px;height:15.6px;background:#fff;box-sizing:border-box;border-style:solid;border-width:2px 1px 1px 2px;border-color:#7a7a7a #f6f6f6 #f6f6f6 #7a7a7a;"></div>
<div class="t" style="left:521.8px;top:285.17px;font-size:13.5px;font-weight:bold;color:#0000ff;font-family:'Liberation Sans', sans-serif;">Física  ( Casos Exporádicos )</div>
<div class="t" style="right:438px;top:312.00px;font-size:13px;font-weight:normal;color:#1e1e1e;font-family:'Liberation Sans', sans-serif;">Alíq. Dedução I.R.F.:</div>
<div class="a" style="left:659.7px;top:305.4px;width:62.299999999999955px;height:23.100000000000023px;background:#fff;box-sizing:border-box;border:1px solid #828282;box-shadow:inset 1px 1px 0 #a8a8a8;"></div>
<div class="t" style="right:373.5px;top:312.00px;font-size:13px;font-weight:normal;color:#111;font-family:'Liberation Sans', sans-serif;">0,00</div>
<div class="t" style="right:440.70000000000005px;top:341.50px;font-size:13px;font-weight:normal;color:#1e1e1e;font-family:'Liberation Sans', sans-serif;">Alíq. Base de Cálculo :</div>
<div class="a" style="left:659.7px;top:335.5px;width:62.299999999999955px;height:23.100000000000023px;background:#fff;box-sizing:border-box;border:1px solid #828282;box-shadow:inset 1px 1px 0 #a8a8a8;"></div>
<div class="t" style="right:373.5px;top:341.50px;font-size:13px;font-weight:normal;color:#111;font-family:'Liberation Sans', sans-serif;">0,00</div>
<div class="t" style="right:442.20000000000005px;top:371.60px;font-size:13px;font-weight:normal;color:#1e1e1e;font-family:'Liberation Sans', sans-serif;">Alíq. de recolhimento :</div>
<div class="a" style="left:659.7px;top:365.2px;width:60.89999999999998px;height:23.5px;background:#fff;box-sizing:border-box;border:1px solid #828282;box-shadow:inset 1px 1px 0 #a8a8a8;"></div>
<div class="t" style="right:375px;top:371.60px;font-size:13px;font-weight:normal;color:#111;font-family:'Liberation Sans', sans-serif;">0,00</div>
<svg class="a" style="left:727px;top:311px" width="14" height="14" viewBox="0 0 14 14"><ellipse cx="4" cy="3.6" rx="2.6" ry="1.5" fill="none" stroke="#111" stroke-width="1.4"/><path d="M1.4 11.5 L10.2 3.2" stroke="#111" stroke-width="1.6"/><ellipse cx="7.8" cy="11.1" rx="2.6" ry="1.5" fill="none" stroke="#111" stroke-width="1.4"/></svg>
<svg class="a" style="left:727px;top:340.5px" width="14" height="14" viewBox="0 0 14 14"><ellipse cx="4" cy="3.6" rx="2.6" ry="1.5" fill="none" stroke="#111" stroke-width="1.4"/><path d="M1.4 11.5 L10.2 3.2" stroke="#111" stroke-width="1.6"/><ellipse cx="7.8" cy="11.1" rx="2.6" ry="1.5" fill="none" stroke="#111" stroke-width="1.4"/></svg>
<svg class="a" style="left:727px;top:370.6px" width="14" height="14" viewBox="0 0 14 14"><ellipse cx="4" cy="3.6" rx="2.6" ry="1.5" fill="none" stroke="#111" stroke-width="1.4"/><path d="M1.4 11.5 L10.2 3.2" stroke="#111" stroke-width="1.6"/><ellipse cx="7.8" cy="11.1" rx="2.6" ry="1.5" fill="none" stroke="#111" stroke-width="1.4"/></svg>
<div class="t" style="left:746.6px;top:341.50px;font-size:13px;font-weight:bold;color:#141480;font-family:'Liberation Sans', sans-serif;">INSS/Senat</div>
<div class="t" style="left:746.6px;top:371.60px;font-size:13px;font-weight:bold;color:#141480;font-family:'Liberation Sans', sans-serif;">Senat</div>
<div class="t" style="left:792px;top:364.94px;font-size:13.3px;font-weight:normal;color:#24248c;font-family:'Liberation Sans', sans-serif;">(Tributará Senat caso o campo</div>
<div class="t" style="left:792px;top:381.74px;font-size:13.3px;font-weight:normal;color:#24248c;font-family:'Liberation Sans', sans-serif;">esteja preenchido)</div>
<div class="t" style="left:119px;top:409.49px;font-size:13.6px;font-weight:bold;color:#0000ff;font-family:'Liberation Sans', sans-serif;">Juridica</div>
<div class="t" style="right:810.5px;top:431.00px;font-size:13px;font-weight:normal;color:#1e1e1e;font-family:'Liberation Sans', sans-serif;">Alíquota de I.C.M.S.</div>
<div class="a" style="left:287.5px;top:424.1px;width:50.5px;height:23.099999999999966px;background:#fff;box-sizing:border-box;border:1px solid #828282;box-shadow:inset 1px 1px 0 #a8a8a8;"></div>
<div class="t" style="left:289.7px;top:429.00px;font-size:13px;font-weight:normal;color:#111;font-family:'Liberation Sans', sans-serif;">0,00</div>
<svg class="a" style="left:342.4px;top:430px" width="14" height="14" viewBox="0 0 14 14"><ellipse cx="4" cy="3.6" rx="2.6" ry="1.5" fill="none" stroke="#111" stroke-width="1.4"/><path d="M1.4 11.5 L10.2 3.2" stroke="#111" stroke-width="1.6"/><ellipse cx="7.8" cy="11.1" rx="2.6" ry="1.5" fill="none" stroke="#111" stroke-width="1.4"/></svg>
<div class="t" style="left:362.2px;top:431.00px;font-size:13px;font-weight:normal;color:#9a2a9a;font-family:'Liberation Sans', sans-serif;">para Micro Empresa</div>
<div class="t" style="right:442px;top:428.50px;font-size:13px;font-weight:normal;color:#1e1e1e;font-family:'Liberation Sans', sans-serif;">Inscrição SUFRAMA :</div>
<div class="a" style="left:659.4px;top:424px;width:74.80000000000007px;height:23.600000000000023px;background:#fff;box-sizing:border-box;border:1px solid #828282;box-shadow:inset 1px 1px 0 #a8a8a8;"></div>
<div class="a" style="left:742.3px;top:424px;width:115.3px;height:22.2px;box-sizing:border-box;border:1px solid #3a5a8a;border-radius:3px;background:linear-gradient(#ffffff,#e8e8f2 50%,#d4d4e6);"></div>
<div class="t" style="left:799.6px;transform:translateX(-50%);top:429.03px;font-size:12.6px;font-weight:normal;color:#141414;font-family:'Liberation Sans', sans-serif;">Validar SUFRAMA</div>
<div class="a" style="left:112.5px;top:451px;width:614.5px;height:85.8px;box-sizing:border-box;border:4.2px solid #ff0000;border-radius:3px;"></div>
<div class="t" style="left:119.3px;top:462.09px;font-size:13.6px;font-weight:bold;color:#0000ff;font-family:'Liberation Sans', sans-serif;">Fisica / Juridica</div>
<div class="t" style="right:838.5px;top:485.06px;font-size:12.8px;font-weight:bold;color:#141480;font-family:'Liberation Sans', sans-serif;">Operação (Entrada):</div>
<div class="t" style="right:838.5px;top:514.36px;font-size:12.8px;font-weight:bold;color:#141480;font-family:'Liberation Sans', sans-serif;">Operação (Saída):</div>
<div class="a" style="left:256px;top:477.6px;width:44px;height:24.69999999999999px;background:#fff;box-sizing:border-box;border:1px solid #828282;box-shadow:inset 1px 1px 0 #a8a8a8;"></div>
<div class="a" style="left:303.2px;top:477.6px;width:18.80000000000001px;height:24.69999999999999px;background:#fff;box-sizing:border-box;border:1px solid #828282;box-shadow:inset 1px 1px 0 #a8a8a8;"></div>
<div class="a" style="left:326px;top:477.6px;width:31px;height:24.69999999999999px;background:#fff;box-sizing:border-box;border:1px solid #828282;box-shadow:inset 1px 1px 0 #a8a8a8;"></div>
<div class="a" style="left:361px;top:478.1px;width:331px;height:22.69999999999999px;background:#000080;box-sizing:border-box;border:1px solid #8a8a8a;"></div>
<div class="a" style="left:256px;top:506.4px;width:44px;height:24.600000000000023px;background:#fff;box-sizing:border-box;border:1px solid #828282;box-shadow:inset 1px 1px 0 #a8a8a8;"></div>
<div class="a" style="left:303.2px;top:506.4px;width:18.80000000000001px;height:24.600000000000023px;background:#fff;box-sizing:border-box;border:1px solid #828282;box-shadow:inset 1px 1px 0 #a8a8a8;"></div>
<div class="a" style="left:326px;top:506.4px;width:31px;height:24.600000000000023px;background:#fff;box-sizing:border-box;border:1px solid #828282;box-shadow:inset 1px 1px 0 #a8a8a8;"></div>
<div class="a" style="left:361px;top:506.9px;width:331px;height:22.600000000000023px;background:#000080;box-sizing:border-box;border:1px solid #8a8a8a;"></div>
<svg class="a" style="left:698px;top:483px" width="24" height="19" viewBox="0 0 24 19">
<path d="M1.3 7.6 L8.1 1.2 Q11.5 1.4 13.5 3.3 Q15.8 3.4 17.6 4.6 L21.8 7.7 L12.3 16.4 L1.3 9.6 Z" fill="#fff"/>
<path d="M1.5 9.9 L12.3 16.8 L21.8 8.1" stroke="#0c0cf0" stroke-width="2" fill="none" stroke-linejoin="round"/>
<path d="M1.3 7.6 L8.1 1.2 Q11.5 1.4 13.5 3.3 Q15.8 3.4 17.6 4.6 L21.8 7.7 L12.3 16 L1.3 9.4 Z" stroke="#1a1a1a" stroke-width="1" fill="none" stroke-linejoin="round"/>
<path d="M13.5 3.3 L6.8 11.2 M12.3 16 L18.6 9.8 M14.2 14.6 L19.6 9.3" stroke="#222" stroke-width="1" fill="none"/>
</svg>
<svg class="a" style="left:698px;top:511px" width="24" height="19" viewBox="0 0 24 19">
<path d="M1.3 7.6 L8.1 1.2 Q11.5 1.4 13.5 3.3 Q15.8 3.4 17.6 4.6 L21.8 7.7 L12.3 16.4 L1.3 9.6 Z" fill="#fff"/>
<path d="M1.5 9.9 L12.3 16.8 L21.8 8.1" stroke="#0c0cf0" stroke-width="2" fill="none" stroke-linejoin="round"/>
<path d="M1.3 7.6 L8.1 1.2 Q11.5 1.4 13.5 3.3 Q15.8 3.4 17.6 4.6 L21.8 7.7 L12.3 16 L1.3 9.4 Z" stroke="#1a1a1a" stroke-width="1" fill="none" stroke-linejoin="round"/>
<path d="M13.5 3.3 L6.8 11.2 M12.3 16 L18.6 9.8 M14.2 14.6 L19.6 9.3" stroke="#222" stroke-width="1" fill="none"/>
</svg>
<div class="t" style="right:196px;top:490.33px;font-size:12.6px;font-weight:normal;color:#1e1e1e;font-family:'Liberation Sans', sans-serif;">SPED [Fiscal/Contabil] :</div>
<div class="a" style="left:898px;top:489px;width:16px;height:15.6px;background:#fff;box-sizing:border-box;border-style:solid;border-width:2px 1px 1px 2px;border-color:#7a7a7a #f6f6f6 #f6f6f6 #7a7a7a;"></div>
<svg class="a" style="left:898px;top:489px" width="16" height="16"><path d="M5 7.4 L7.4 9.8 L10.8 4.6" stroke="#000" stroke-width="1.8" fill="none"/></svg>
<div class="t" style="left:920.4px;top:490.00px;font-size:13px;font-weight:normal;color:#1e1e1e;font-family:'Liberation Sans', sans-serif;">Gera</div>
<div class="t" style="right:200.70000000000005px;top:512.60px;font-size:13px;font-weight:normal;color:#1e1e1e;font-family:'Liberation Sans', sans-serif;">Subst.Tributária por CNAE :</div>
<div class="a" style="left:898px;top:513px;width:16px;height:15.6px;background:#fff;box-sizing:border-box;border-style:solid;border-width:2px 1px 1px 2px;border-color:#7a7a7a #f6f6f6 #f6f6f6 #7a7a7a;"></div>
<div class="t" style="left:919px;top:512.40px;font-size:13px;font-weight:normal;color:#1e1e1e;font-family:'Liberation Sans', sans-serif;">(Carga média)</div>
<div class="t" style="right:843.4px;top:537.50px;font-size:13px;font-weight:normal;color:#1e1e1e;font-family:'Liberation Sans', sans-serif;">Tributa :</div>
<div class="a" style="left:255px;top:539px;width:16px;height:15.6px;background:#fff;box-sizing:border-box;border-style:solid;border-width:2px 1px 1px 2px;border-color:#7a7a7a #f6f6f6 #f6f6f6 #7a7a7a;"></div>
<div class="t" style="left:277.3px;top:539.70px;font-size:13.7px;font-weight:normal;color:#111;font-family:'Liberation Serif', serif;">I.N.S.S</div>
<div class="t" style="left:326.8px;top:540.60px;font-size:13px;font-weight:normal;color:#2020f0;font-family:'Liberation Sans', sans-serif;">(Jurídica Tributa INSS) (Física Tributa INSS + Senat)</div>
<div class="t" style="left:643.9px;top:540.60px;font-size:13px;font-weight:normal;color:#ff1010;font-family:'Liberation Sans', sans-serif;">Obs : A aliq de Calc. INSS reside na Tabela de INSS</div>
<div class="t" style="right:835px;top:572.70px;font-size:13px;font-weight:normal;color:#1e1e1e;font-family:'Liberation Sans', sans-serif;">Categoria Despesa :</div>
<div class="a" style="left:263.6px;top:566.9px;width:55.599999999999966px;height:22.300000000000068px;background:#fff;box-sizing:border-box;border:1px solid #828282;box-shadow:inset 1px 1px 0 #a8a8a8;"></div>
<div class="a" style="left:323.4px;top:566.9px;width:368.6px;height:22.300000000000068px;background:#000080;box-sizing:border-box;border:1px solid #8a8a8a;"></div>
<svg class="a" style="left:698px;top:573px" width="24" height="19" viewBox="0 0 24 19">
<path d="M1.3 7.6 L8.1 1.2 Q11.5 1.4 13.5 3.3 Q15.8 3.4 17.6 4.6 L21.8 7.7 L12.3 16.4 L1.3 9.6 Z" fill="#fff"/>
<path d="M1.5 9.9 L12.3 16.8 L21.8 8.1" stroke="#0c0cf0" stroke-width="2" fill="none" stroke-linejoin="round"/>
<path d="M1.3 7.6 L8.1 1.2 Q11.5 1.4 13.5 3.3 Q15.8 3.4 17.6 4.6 L21.8 7.7 L12.3 16 L1.3 9.4 Z" stroke="#1a1a1a" stroke-width="1" fill="none" stroke-linejoin="round"/>
<path d="M13.5 3.3 L6.8 11.2 M12.3 16 L18.6 9.8 M14.2 14.6 L19.6 9.3" stroke="#222" stroke-width="1" fill="none"/>
</svg>
<div class="t" style="right:842.6px;top:602.20px;font-size:13px;font-weight:normal;color:#1e1e1e;font-family:'Liberation Sans', sans-serif;">Categoria Receita :</div>
<div class="a" style="left:263.6px;top:596.4px;width:55.599999999999966px;height:23.200000000000045px;background:#fff;box-sizing:border-box;border:1px solid #828282;box-shadow:inset 1px 1px 0 #a8a8a8;"></div>
<div class="a" style="left:323.4px;top:596.4px;width:368.6px;height:23.200000000000045px;background:#000080;box-sizing:border-box;border:1px solid #8a8a8a;"></div>
<svg class="a" style="left:698px;top:602px" width="24" height="19" viewBox="0 0 24 19">
<path d="M1.3 7.6 L8.1 1.2 Q11.5 1.4 13.5 3.3 Q15.8 3.4 17.6 4.6 L21.8 7.7 L12.3 16.4 L1.3 9.6 Z" fill="#fff"/>
<path d="M1.5 9.9 L12.3 16.8 L21.8 8.1" stroke="#0c0cf0" stroke-width="2" fill="none" stroke-linejoin="round"/>
<path d="M1.3 7.6 L8.1 1.2 Q11.5 1.4 13.5 3.3 Q15.8 3.4 17.6 4.6 L21.8 7.7 L12.3 16 L1.3 9.4 Z" stroke="#1a1a1a" stroke-width="1" fill="none" stroke-linejoin="round"/>
<path d="M13.5 3.3 L6.8 11.2 M12.3 16 L18.6 9.8 M14.2 14.6 L19.6 9.3" stroke="#222" stroke-width="1" fill="none"/>
</svg>
<div class="t" style="right:233.10000000000002px;top:603.00px;font-size:13px;font-weight:normal;color:#1e1e1e;font-family:'Liberation Sans', sans-serif;">Nº Registro ANTT :</div>
<div class="a" style="left:864.8px;top:596.7px;width:117.70000000000005px;height:23.0px;background:#fff;box-sizing:border-box;border:1px solid #828282;box-shadow:inset 1px 1px 0 #a8a8a8;"></div>
<div class="t" style="right:835.9px;top:639.00px;font-size:13px;font-weight:normal;color:#1e1e1e;font-family:'Liberation Sans', sans-serif;">Conta Fornecedor :</div>
<div class="a" style="left:263.6px;top:633px;width:80.89999999999998px;height:22.399999999999977px;background:#fff;box-sizing:border-box;border:1px solid #828282;box-shadow:inset 1px 1px 0 #a8a8a8;"></div>
<div class="a" style="left:348.7px;top:633px;width:343.3px;height:22.399999999999977px;background:#000080;box-sizing:border-box;border:1px solid #8a8a8a;"></div>
<svg class="a" style="left:698px;top:638px" width="24" height="19" viewBox="0 0 24 19">
<path d="M1.3 7.6 L8.1 1.2 Q11.5 1.4 13.5 3.3 Q15.8 3.4 17.6 4.6 L21.8 7.7 L12.3 16.4 L1.3 9.6 Z" fill="#fff"/>
<path d="M1.5 9.9 L12.3 16.8 L21.8 8.1" stroke="#0c0cf0" stroke-width="2" fill="none" stroke-linejoin="round"/>
<path d="M1.3 7.6 L8.1 1.2 Q11.5 1.4 13.5 3.3 Q15.8 3.4 17.6 4.6 L21.8 7.7 L12.3 16 L1.3 9.4 Z" stroke="#1a1a1a" stroke-width="1" fill="none" stroke-linejoin="round"/>
<path d="M13.5 3.3 L6.8 11.2 M12.3 16 L18.6 9.8 M14.2 14.6 L19.6 9.3" stroke="#222" stroke-width="1" fill="none"/>
</svg>
<div class="t" style="right:835.9px;top:667.60px;font-size:13px;font-weight:normal;color:#1e1e1e;font-family:'Liberation Sans', sans-serif;">Conta Cliente :</div>
<div class="a" style="left:263.6px;top:660.9px;width:80.89999999999998px;height:23.100000000000023px;background:#fff;box-sizing:border-box;border:1px solid #828282;box-shadow:inset 1px 1px 0 #a8a8a8;"></div>
<div class="a" style="left:348.7px;top:660.9px;width:343.3px;height:23.100000000000023px;background:#000080;box-sizing:border-box;border:1px solid #8a8a8a;"></div>
<svg class="a" style="left:698px;top:667px" width="24" height="19" viewBox="0 0 24 19">
<path d="M1.3 7.6 L8.1 1.2 Q11.5 1.4 13.5 3.3 Q15.8 3.4 17.6 4.6 L21.8 7.7 L12.3 16.4 L1.3 9.6 Z" fill="#fff"/>
<path d="M1.5 9.9 L12.3 16.8 L21.8 8.1" stroke="#0c0cf0" stroke-width="2" fill="none" stroke-linejoin="round"/>
<path d="M1.3 7.6 L8.1 1.2 Q11.5 1.4 13.5 3.3 Q15.8 3.4 17.6 4.6 L21.8 7.7 L12.3 16 L1.3 9.4 Z" stroke="#1a1a1a" stroke-width="1" fill="none" stroke-linejoin="round"/>
<path d="M13.5 3.3 L6.8 11.2 M12.3 16 L18.6 9.8 M14.2 14.6 L19.6 9.3" stroke="#222" stroke-width="1" fill="none"/>
</svg>
<div class="t" style="right:233.10000000000002px;top:639.00px;font-size:13px;font-weight:normal;color:#1e1e1e;font-family:'Liberation Sans', sans-serif;">Cod. Agente ANP :</div>
<div class="a" style="left:864.8px;top:633.4px;width:117.70000000000005px;height:22.899999999999977px;background:#fff;box-sizing:border-box;border:1px solid #828282;box-shadow:inset 1px 1px 0 #a8a8a8;"></div>
<div class="t" style="right:230.79999999999995px;top:667.86px;font-size:13.4px;font-weight:normal;color:#1e1e1e;font-family:'Liberation Sans', sans-serif;">Cod. Instalação ANP :</div>
<div class="a" style="left:864.8px;top:663.7px;width:117.70000000000005px;height:22.399999999999977px;background:#fff;box-sizing:border-box;border:1px solid #828282;box-shadow:inset 1px 1px 0 #a8a8a8;"></div>
<div class="t" style="right:923.5px;top:703.40px;font-size:13px;font-weight:normal;color:#1e1e1e;font-family:'Liberation Sans', sans-serif;">CNAE :</div>
<div class="a" style="left:172.5px;top:697.6px;width:86.89999999999998px;height:22.399999999999977px;background:#fff;box-sizing:border-box;border:1px solid #828282;box-shadow:inset 1px 1px 0 #a8a8a8;"></div>
<div class="a" style="left:263.6px;top:696.7px;width:718.9px;height:48.299999999999955px;background:#fff;box-sizing:border-box;border:1px solid #828282;box-shadow:inset 1px 1px 0 #a8a8a8;"></div>
<div class="a" style="left:960.6px;top:697.7px;width:21px;height:46.3px;background:#f0f0f0;"></div>
<svg class="a" style="left:961px;top:702px" width="20" height="38" viewBox="0 0 20 38">
<path d="M3.5 12 L10 4 L16.5 12 Z" fill="#a2a2a2"/><path d="M3.5 28 L10 36.5 L16.5 28 Z" fill="#a2a2a2"/></svg>
<div class="t" style="left:119px;top:764.85px;font-size:13.65px;font-weight:bold;color:#0000ff;font-family:'Liberation Sans', sans-serif;">CPFs ou CNPJs autorizado(s) a acessar XML no Sefaz, relacionado ao Destinatário:</div>
<div class="t" style="left:131.6px;top:792.90px;font-size:13px;font-weight:normal;color:#111;font-family:'Liberation Sans', sans-serif;">1</div>
<div class="a" style="left:142.2px;top:786.5px;width:149.60000000000002px;height:23.5px;background:#fff;box-sizing:border-box;border:1px solid #828282;box-shadow:inset 1px 1px 0 #a8a8a8;"></div>
<svg class="a" style="left:295px;top:785px" width="24" height="24" viewBox="0 0 24 24">
<path d="M3.4 13 Q3.8 10.4 6 9.7 Q7.8 9.3 9.8 10.3 L7.4 11.9 Q6.2 11.7 5.6 13.4 Z" fill="#000"/>
<path d="M10.3 14.8 Q5.6 14.2 3.2 17.3 Q1.6 20.4 3.6 22 Q5.4 22.9 9 22.5 L13.4 22.5 Q12.1 21.1 11.3 19.2 L11 15.4 Z" fill="#000"/>
<ellipse cx="5.9" cy="18.8" rx="1.2" ry="1.7" transform="rotate(30 5.9 18.8)" fill="#f4f4f4"/>
<circle cx="6.3" cy="5.5" r="0.9" fill="#000"/><circle cx="7.6" cy="8" r="0.7" fill="#444"/><circle cx="16.5" cy="20.6" r="0.9" fill="#000"/><circle cx="14" cy="19.3" r="0.6" fill="#333"/>
<path d="M13.9 9.8 L20.4 2.1 Q21.8 1.3 22.6 2.6 L22.7 8.2 L17.1 13 Z" fill="#ffff00"/>
<path d="M13.9 9.8 L20.4 2.1 M22.7 8.2 L17.1 13" stroke="#2a2a10" stroke-width="0.9" fill="none"/>
<path d="M15 10.8 L16.4 12.2 M16.2 9.4 L17.6 10.8" stroke="#4a4a00" stroke-width="0.9"/>
<path d="M11 12.9 L13.9 9.8 L17.1 13 L14 16.4 Q12.8 17.3 11.6 16.1 L10.8 15 Q10.2 13.8 11 12.9 Z" fill="#ff0000" stroke="#1a0000" stroke-width="0.8"/>
</svg>
<div class="t" style="left:345.8px;top:792.90px;font-size:13px;font-weight:normal;color:#111;font-family:'Liberation Sans', sans-serif;">2</div>
<div class="a" style="left:357.2px;top:786.5px;width:149.60000000000002px;height:23.5px;background:#fff;box-sizing:border-box;border:1px solid #828282;box-shadow:inset 1px 1px 0 #a8a8a8;"></div>
<svg class="a" style="left:510px;top:785px" width="24" height="24" viewBox="0 0 24 24">
<path d="M3.4 13 Q3.8 10.4 6 9.7 Q7.8 9.3 9.8 10.3 L7.4 11.9 Q6.2 11.7 5.6 13.4 Z" fill="#000"/>
<path d="M10.3 14.8 Q5.6 14.2 3.2 17.3 Q1.6 20.4 3.6 22 Q5.4 22.9 9 22.5 L13.4 22.5 Q12.1 21.1 11.3 19.2 L11 15.4 Z" fill="#000"/>
<ellipse cx="5.9" cy="18.8" rx="1.2" ry="1.7" transform="rotate(30 5.9 18.8)" fill="#f4f4f4"/>
<circle cx="6.3" cy="5.5" r="0.9" fill="#000"/><circle cx="7.6" cy="8" r="0.7" fill="#444"/><circle cx="16.5" cy="20.6" r="0.9" fill="#000"/><circle cx="14" cy="19.3" r="0.6" fill="#333"/>
<path d="M13.9 9.8 L20.4 2.1 Q21.8 1.3 22.6 2.6 L22.7 8.2 L17.1 13 Z" fill="#ffff00"/>
<path d="M13.9 9.8 L20.4 2.1 M22.7 8.2 L17.1 13" stroke="#2a2a10" stroke-width="0.9" fill="none"/>
<path d="M15 10.8 L16.4 12.2 M16.2 9.4 L17.6 10.8" stroke="#4a4a00" stroke-width="0.9"/>
<path d="M11 12.9 L13.9 9.8 L17.1 13 L14 16.4 Q12.8 17.3 11.6 16.1 L10.8 15 Q10.2 13.8 11 12.9 Z" fill="#ff0000" stroke="#1a0000" stroke-width="0.8"/>
</svg>
<div class="t" style="left:561.2px;top:792.90px;font-size:13px;font-weight:normal;color:#111;font-family:'Liberation Sans', sans-serif;">3</div>
<div class="a" style="left:571.3px;top:786.5px;width:150.5px;height:23.5px;background:#fff;box-sizing:border-box;border:1px solid #828282;box-shadow:inset 1px 1px 0 #a8a8a8;"></div>
<svg class="a" style="left:725px;top:785px" width="24" height="24" viewBox="0 0 24 24">
<path d="M3.4 13 Q3.8 10.4 6 9.7 Q7.8 9.3 9.8 10.3 L7.4 11.9 Q6.2 11.7 5.6 13.4 Z" fill="#000"/>
<path d="M10.3 14.8 Q5.6 14.2 3.2 17.3 Q1.6 20.4 3.6 22 Q5.4 22.9 9 22.5 L13.4 22.5 Q12.1 21.1 11.3 19.2 L11 15.4 Z" fill="#000"/>
<ellipse cx="5.9" cy="18.8" rx="1.2" ry="1.7" transform="rotate(30 5.9 18.8)" fill="#f4f4f4"/>
<circle cx="6.3" cy="5.5" r="0.9" fill="#000"/><circle cx="7.6" cy="8" r="0.7" fill="#444"/><circle cx="16.5" cy="20.6" r="0.9" fill="#000"/><circle cx="14" cy="19.3" r="0.6" fill="#333"/>
<path d="M13.9 9.8 L20.4 2.1 Q21.8 1.3 22.6 2.6 L22.7 8.2 L17.1 13 Z" fill="#ffff00"/>
<path d="M13.9 9.8 L20.4 2.1 M22.7 8.2 L17.1 13" stroke="#2a2a10" stroke-width="0.9" fill="none"/>
<path d="M15 10.8 L16.4 12.2 M16.2 9.4 L17.6 10.8" stroke="#4a4a00" stroke-width="0.9"/>
<path d="M11 12.9 L13.9 9.8 L17.1 13 L14 16.4 Q12.8 17.3 11.6 16.1 L10.8 15 Q10.2 13.8 11 12.9 Z" fill="#ff0000" stroke="#1a0000" stroke-width="0.8"/>
</svg>
<div class="a" style="left:883px;top:842.4px;width:72.70000000000005px;height:22.6px;box-sizing:border-box;border:1.5px solid #3c5f8c;border-radius:3.5px;background:linear-gradient(#ffffff,#eeeef6 45%,#d2d2e4);"></div>
<div class="a" style="left:968.2px;top:842.4px;width:72.39999999999986px;height:22.6px;box-sizing:border-box;border:1.5px solid #3c5f8c;border-radius:3.5px;background:linear-gradient(#ffffff,#eeeef6 45%,#d2d2e4);"></div>
<div class="t" style="left:919.3px;transform:translateX(-50%);top:848.00px;font-size:13px;font-weight:normal;color:#141414;font-family:'Liberation Sans', sans-serif;">Confirma</div>
<div class="t" style="left:1004.4px;transform:translateX(-50%);top:848.00px;font-size:13px;font-weight:normal;color:#141414;font-family:'Liberation Sans', sans-serif;">Saída</div>
<div class="a" style="left:891.5px;top:859.6px;width:9px;height:1px;background:#141414;"></div>
<div class="a" style="left:987.5px;top:859.6px;width:8.5px;height:1px;background:#141414;"></div>
</body></html>
